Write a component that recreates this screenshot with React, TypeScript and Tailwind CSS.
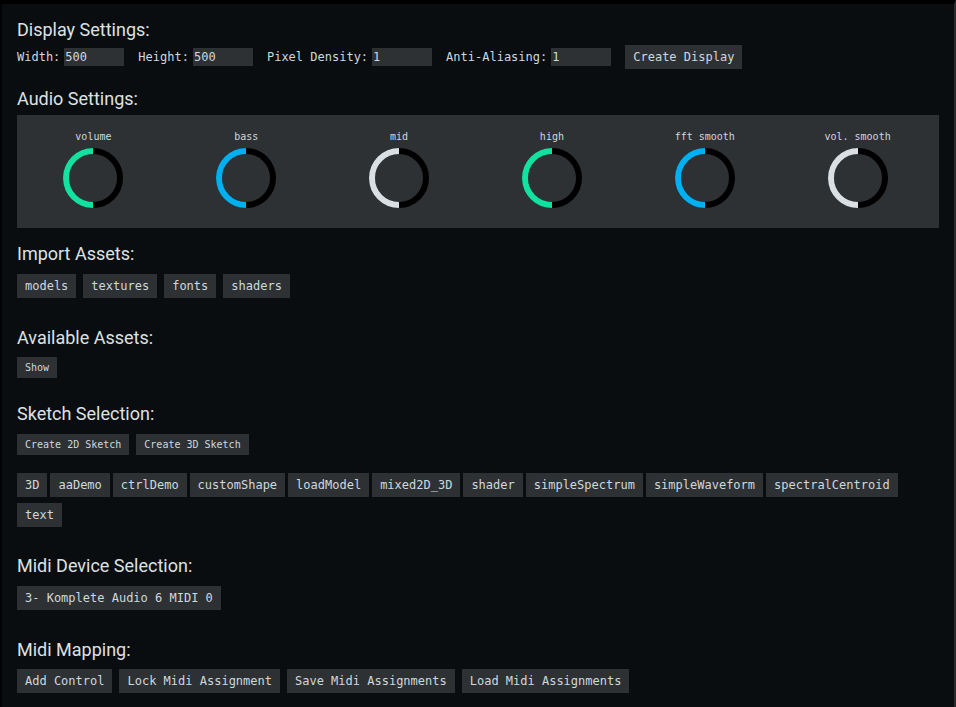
import React from "react";

const mono = { fontFamily: '"DejaVu Sans Mono", "Liberation Mono", monospace' };

const knobs = [
  { label: "volume", color: "#14e0a0" },
  { label: "bass", color: "#00b0f0" },
  { label: "mid", color: "#d9dfe3" },
  { label: "high", color: "#14e0a0" },
  { label: "fft smooth", color: "#00b0f0" },
  { label: "vol. smooth", color: "#d9dfe3" },
];

const sketches = [
  "3D",
  "aaDemo",
  "ctrlDemo",
  "customShape",
  "loadModel",
  "mixed2D_3D",
  "shader",
  "simpleSpectrum",
  "simpleWaveform",
  "spectralCentroid",
  "text",
];

function Heading({ children }: { children: React.ReactNode }) {
  return (
    <h2 className="text-[18px] leading-[22px] text-[#dde1e4] font-normal" style={{ fontFamily: "Roboto, sans-serif" }}>
      {children}
    </h2>
  );
}

function Btn({ children, small }: { children: React.ReactNode; small?: boolean }) {
  return (
    <button
      className={
        small
          ? "bg-[#2e3133] text-[#cdd8df] text-[10px] leading-[13px] px-2 py-1"
          : "bg-[#2e3133] text-[#cdd8df] text-[12px] leading-[14px] px-2 py-[5px]"
      }
      style={mono}
    >
      {children}
    </button>
  );
}

function Field({ label, value }: { label: string; value: string }) {
  return (
    <div className="flex items-center mr-[14px]">
      <span className="text-[12px] text-[#cdd8df] mr-1">{label}</span>
      <input
        defaultValue={value}
        className="w-[60px] h-[18px] bg-[#2e3133] text-[#cdd8df] text-[12px] px-[1px] outline-none"
        style={mono}
      />
    </div>
  );
}

function Knob({ label, color }: { label: string; color: string }) {
  return (
    <div className="flex flex-col items-center">
      <span className="text-[10px] leading-[13px] text-[#cdd8df]">{label}</span>
      <svg width="60" height="60" viewBox="0 0 60 60" className="mt-[5px]">
        <circle cx="30" cy="30" r="27" fill="none" stroke="#000" strokeWidth="6" />
        <path d="M30 3 A27 27 0 0 0 30 57" fill="none" stroke={color} strokeWidth="6" />
      </svg>
    </div>
  );
}

export default function App() {
  return (
    <div
      className="min-h-screen bg-[#090d10] border-t-4 border-t-black border-l-2 border-l-[#020304] border-r-2 border-r-[#2a2c2e] pl-[15px] pr-[15px] pb-4"
      style={mono}
    >
      <div className="pt-[15px]">
        <Heading>Display Settings:</Heading>
        <div className="flex items-center mt-1">
          <Field label="Width:" value="500" />
          <Field label="Height:" value="500" />
          <Field label="Pixel Density:" value="1" />
          <Field label="Anti-Aliasing:" value="1" />
          <Btn>Create Display</Btn>
        </div>
      </div>

      <div className="mt-[19px]">
        <Heading>Audio Settings:</Heading>
        <div className="mt-[5px] bg-[#2e3133] grid grid-cols-6 pt-[15px] pb-[20px] pr-[5px]">
          {knobs.map((k) => (
            <Knob key={k.label} label={k.label} color={k.color} />
          ))}
        </div>
      </div>

      <div className="mt-[15px]">
        <Heading>Import Assets:</Heading>
        <div className="flex gap-[7px] mt-[9px]">
          <Btn>models</Btn>
          <Btn>textures</Btn>
          <Btn>fonts</Btn>
          <Btn>shaders</Btn>
        </div>
      </div>

      <div className="mt-[29px]">
        <Heading>Available Assets:</Heading>
        <div className="flex mt-[8px]">
          <Btn small>Show</Btn>
        </div>
      </div>

      <div className="mt-[25px]">
        <Heading>Sketch Selection:</Heading>
        <div className="flex gap-[7px] mt-[9px]">
          <Btn small>Create 2D Sketch</Btn>
          <Btn small>Create 3D Sketch</Btn>
        </div>
        <div className="flex flex-wrap gap-x-[3px] gap-y-[6px] mt-[18px]">
          {sketches.map((s) => (
            <Btn key={s}>{s}</Btn>
          ))}
        </div>
      </div>

      <div className="mt-[28px]">
        <Heading>Midi Device Selection:</Heading>
        <div className="flex mt-[9px]">
          <Btn>3- Komplete Audio 6 MIDI 0</Btn>
        </div>
      </div>

      <div className="mt-[29px]">
        <Heading>Midi Mapping:</Heading>
        <div className="flex gap-[7px] mt-[8px]">
          <Btn>Add Control</Btn>
          <Btn>Lock Midi Assignment</Btn>
          <Btn>Save Midi Assignments</Btn>
          <Btn>Load Midi Assignments</Btn>
        </div>
      </div>
    </div>
  );
}
